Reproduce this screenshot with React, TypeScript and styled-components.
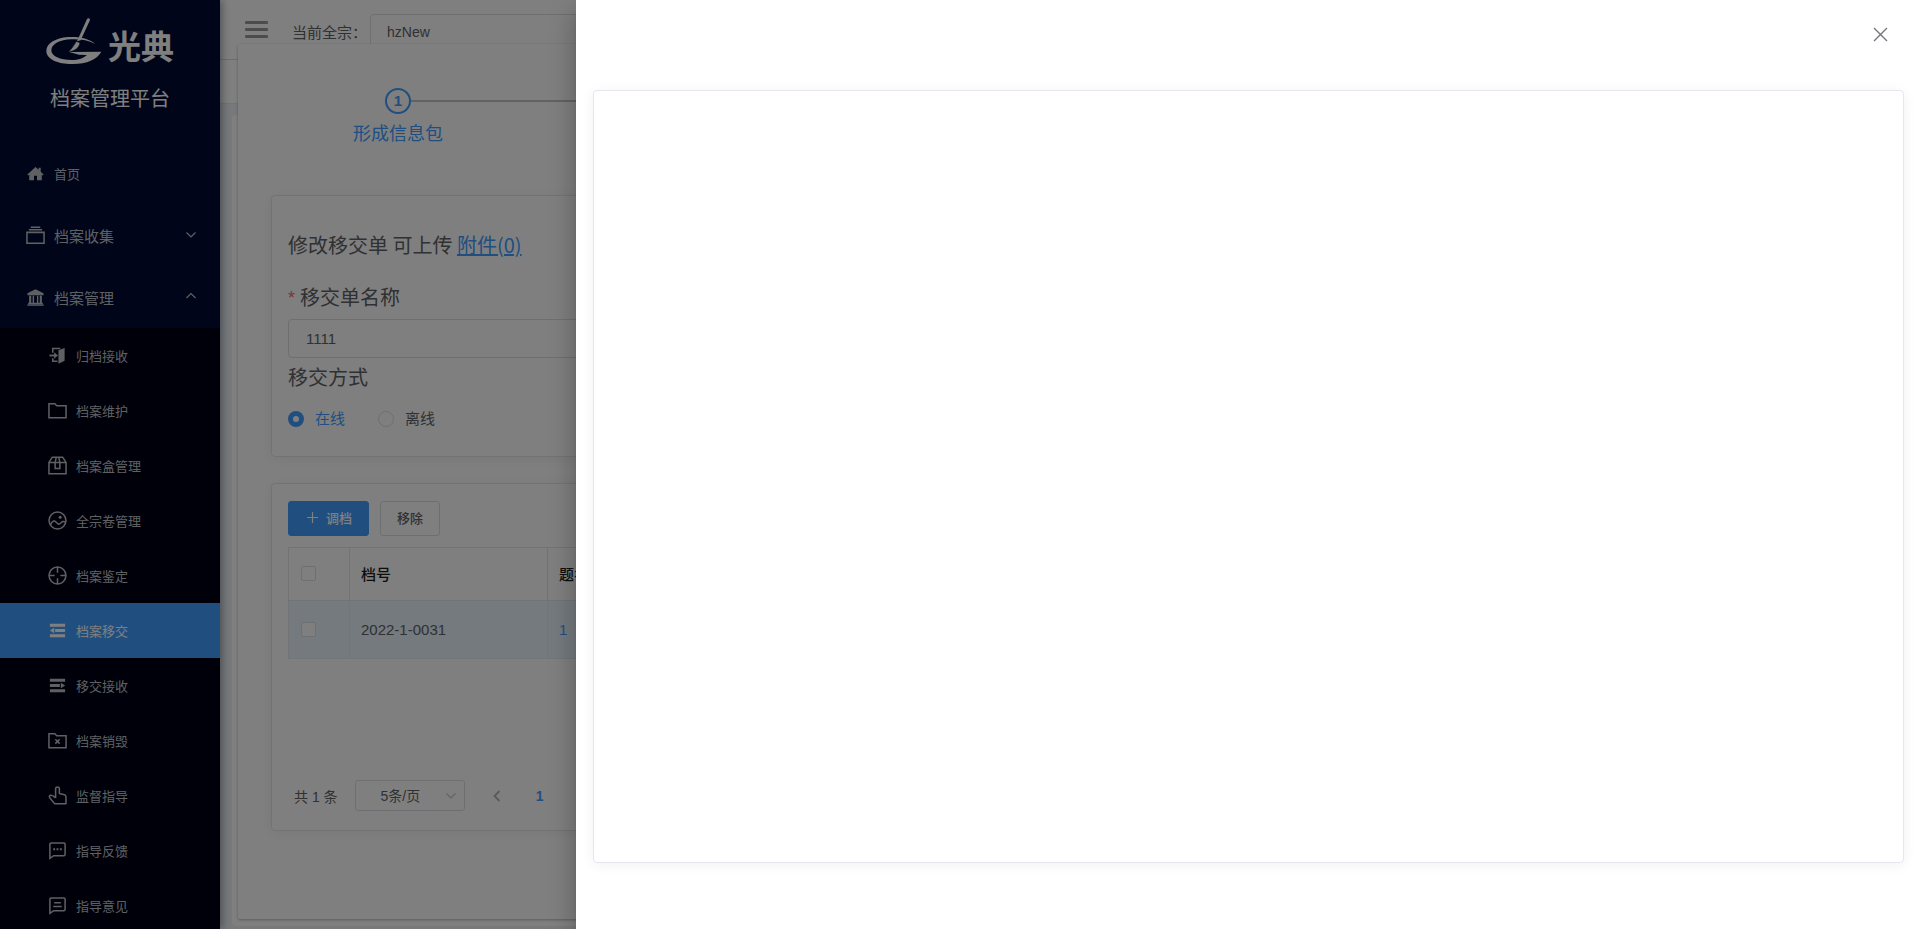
import React from 'react';
import styled, { createGlobalStyle, css } from 'styled-components';

const Global = createGlobalStyle`
  * { box-sizing: border-box; }
  html, body, #root { height: 100%; }
  body {
    margin: 0;
    overflow: hidden;
    color: #606266;
    background: #f0f2f5;
    font-family: "Liberation Sans", "Noto Sans CJK SC", sans-serif;
    font-size: 15px;
  }
  button, input, select { font-family: inherit; }
`;

const Shell = styled.div`
  position: relative;
  display: flex;
  height: 100vh;
  overflow: hidden;
`;

/* ---------- sidebar ---------- */

const Sidebar = styled.aside`
  position: relative;
  z-index: 3;
  flex: 0 0 220px;
  background: #000a32;
  color: #bfc1c5;
  box-shadow: 2px 0 8px rgba(0, 21, 41, 0.4);
  overflow: hidden;
`;

const Brand = styled.div`
  display: flex;
  flex-direction: column;
  align-items: center;
  height: 142px;
  padding-top: 14px;
  color: #fff;
`;

const LogoRow = styled.div`
  display: flex;
  align-items: center;
  gap: 6px;
  height: 54px;
`;

const LogoText = styled.span`
  padding-top: 8px;
  color: #fff;
  font: 700 33px/40px "Noto Sans CJK SC", sans-serif;
`;

const BrandTitle = styled.h1`
  margin: 16px 0 0;
  font-size: 20px;
  font-weight: 400;
  line-height: 30px;
`;

const Menu = styled.nav`
  display: flex;
  flex-direction: column;
`;

const MenuLink = styled.a<{ $small?: boolean }>`
  display: flex;
  align-items: center;
  gap: 9px;
  height: 62px;
  padding: 0 23px 0 26px;
  color: inherit;
  font-size: ${(p) => (p.$small ? 13 : 15)}px;
  text-decoration: none;
`;

const MenuLabel = styled.span`
  flex: 1;
`;

const SubMenu = styled.div`
  background: #000114;
`;

const SubLink = styled.a<{ $active?: boolean }>`
  display: flex;
  align-items: center;
  gap: 9px;
  height: 55px;
  padding-left: 48px;
  color: ${(p) => (p.$active ? '#fff' : 'inherit')};
  background: ${(p) => (p.$active ? '#409eff' : 'transparent')};
  font-size: 13px;
  text-decoration: none;
`;

/* ---------- page behind the dialog ---------- */

const Main = styled.div`
  flex: 1;
  display: flex;
  flex-direction: column;
  min-width: 0;
`;

const Header = styled.header`
  display: flex;
  align-items: center;
  flex: 0 0 60px;
  padding: 0 25px;
  background: #fff;
  border-bottom: 1px solid #d8dce5;
`;

const MenuToggle = styled.button`
  display: flex;
  margin-right: 24px;
  padding: 0;
  border: 0;
  background: none;
  color: #97999d;
`;

const FondsField = styled.div`
  display: flex;
  align-items: center;
  gap: 4px;
  padding-top: 4px;
`;

const HeaderLabel = styled.label`
  width: 74px;
  white-space: nowrap;
`;

const HeaderSelect = styled.select`
  appearance: none;
  width: 240px;
  height: 36px;
  padding: 0 16px;
  color: #606266;
  background: #fff;
  border: 1px solid #dcdfe6;
  border-radius: 4px;
  font-size: 14px;
`;

const TagsBar = styled.div`
  flex: 0 0 44px;
  background: #fff;
  border-bottom: 1px solid #e4e7ed;
`;

const PageCard = styled.div`
  flex: 1;
  margin: 11px 12px 3px;
  background: #fff;
  border-radius: 4px;
`;

/* ---------- dialog ---------- */

const Dialog = styled.section`
  position: absolute;
  z-index: 2;
  inset: 44px 6px 10px 238px;
  padding: 44px 33px 0;
  background: #fff;
  border-radius: 2px;
  box-shadow: 0 1px 3px rgba(0, 0, 0, 0.3);
`;

const Step = styled.div`
  margin-bottom: 40px;
  color: #409eff;
`;

const StepHead = styled.div`
  display: flex;
  align-items: center;
  padding-left: 114px;
`;

const StepNumber = styled.span`
  width: 26px;
  height: 26px;
  border: 2px solid #409eff;
  border-radius: 50%;
  font-size: 15px;
  font-weight: 700;
  line-height: 22px;
  text-align: center;
`;

const StepLine = styled.span`
  flex: 1;
  height: 2px;
  background: #c0c4cc;
`;

const StepTitle = styled.div`
  width: 254px;
  font-size: 18px;
  line-height: 41px;
  text-align: center;
`;

const cardStyle = css`
  background: #fff;
  border: 1px solid #e4e7ed;
  border-radius: 4px;
  box-shadow: 0 2px 14px rgba(0, 0, 0, 0.06);
`;

const FormCard = styled.form`
  ${cardStyle}
  padding: 34px 16px 27px;
  margin-bottom: 26px;
`;

const FormTitle = styled.h2`
  margin: 0 0 23px;
  font-family: "Noto Sans CJK SC", sans-serif;
  font-size: 20px;
  font-weight: 400;
  line-height: 30px;
`;

const BlueLink = styled.a`
  color: #409eff;
`;

const FieldLabel = styled.label`
  display: flex;
  align-items: center;
  margin-bottom: 6px;
  font-size: 20px;
  line-height: 30px;
`;

const Required = styled.span`
  margin-right: 5px;
  color: #f56c6c;
  font-size: 18px;
`;

const TextInput = styled.input`
  display: block;
  width: 100%;
  height: 39px;
  padding: 0 17px;
  color: #606266;
  border: 1px solid #dcdfe6;
  border-radius: 4px;
  font-size: 15px;
`;

const RadioGroup = styled.fieldset`
  margin: 5px 0 0;
  padding: 0;
  border: 0;
`;

const Legend = styled.legend`
  padding: 0;
  margin-bottom: 16px;
  font-size: 20px;
  line-height: 30px;
`;

const RadioRow = styled.div`
  display: flex;
  gap: 33px;
`;

const RadioLabel = styled.label`
  display: flex;
  align-items: center;
  gap: 11px;
  height: 20px;
  line-height: 20px;
  &:has(input:checked) { color: #409eff; }
`;

const Radio = styled.input`
  appearance: none;
  width: 16px;
  height: 16px;
  margin: 0;
  border: 1px solid #dcdfe6;
  border-radius: 50%;
  background: #fff;
  &:checked { border: 5px solid #409eff; }
`;

const ListCard = styled.div`
  ${cardStyle}
  padding: 17px 16px 19px;
`;

const Toolbar = styled.div`
  display: flex;
  gap: 11px;
  margin-bottom: 11px;
`;

const Button = styled.button<{ $primary?: boolean }>`
  display: flex;
  align-items: center;
  gap: 6px;
  height: 35px;
  padding: 0 16px 2px;
  border: 1px solid ${(p) => (p.$primary ? '#409eff' : '#dcdfe6')};
  border-radius: 3px;
  color: ${(p) => (p.$primary ? '#fff' : '#606266')};
  background: ${(p) => (p.$primary ? '#409eff' : '#fff')};
  font-size: 13px;
  font-weight: 500;
`;

const Table = styled.table`
  width: 100%;
  table-layout: fixed;
  border-collapse: separate;
  border-spacing: 0;
  border: 1px solid #e4e7ed;
  border-width: 1px 0 0 1px;
  th, td {
    padding: 0 11px;
    border: 1px solid #e4e7ed;
    border-width: 0 1px 1px 0;
    text-align: left;
  }
  th { height: 53px; padding-bottom: 2px; color: #1a1a1a; font-weight: 500; }
  td { height: 58px; background: #e9f5fd; border-color: #e2ecf3; }
`;

const Checkbox = styled.input`
  appearance: none;
  display: block;
  width: 15px;
  height: 15px;
  margin: 0 1px;
  border: 1px solid #dcdfe6;
  border-radius: 2px;
  background: #fff;
`;

const RowLink = styled.a`
  color: #409eff;
  text-decoration: none;
`;

const Pagination = styled.div`
  display: flex;
  align-items: center;
  height: 31px;
  margin-top: 121px;
  padding-left: 6px;
  font-size: 14px;
`;

const SizePicker = styled.div`
  display: grid;
  align-items: center;
  width: 110px;
  margin: 0 17px;
  color: #c0c4cc;
  > * { grid-area: 1 / 1; }
  > svg { justify-self: end; margin-right: 8px; pointer-events: none; }
`;

const SizeSelect = styled.select`
  appearance: none;
  width: 110px;
  height: 31px;
  padding: 0 25px;
  color: #606266;
  background: #fff;
  border: 1px solid #dcdfe6;
  border-radius: 3px;
  font-size: 14px;
`;

const PageButton = styled.button<{ $current?: boolean }>`
  display: flex;
  justify-content: center;
  align-items: center;
  width: 30px;
  height: 28px;
  margin-right: 13px;
  padding: 0;
  border: 0;
  background: none;
  color: ${(p) => (p.$current ? '#409eff' : '#b0b3b8')};
  font-size: 14px;
  font-weight: 700;
`;

/* ---------- drawer ---------- */

const Mask = styled.div`
  position: fixed;
  z-index: 10;
  inset: 0;
  background: rgba(0, 0, 0, 0.5);
`;

const Drawer = styled.section`
  position: fixed;
  z-index: 11;
  inset: 0 0 0 auto;
  display: flex;
  flex-direction: column;
  width: 70%;
  background: #fff;
  box-shadow: 0 8px 10px -5px rgba(0, 0, 0, 0.2),
    0 16px 24px 2px rgba(0, 0, 0, 0.14), 0 6px 30px 5px rgba(0, 0, 0, 0.12);
`;

const DrawerHeader = styled.header`
  display: flex;
  justify-content: flex-end;
  flex: 0 0 90px;
  padding: 24px 29px 0 0;
`;

const CloseButton = styled.button`
  display: flex;
  width: 21px;
  height: 21px;
  padding: 0;
  border: 0;
  background: none;
  color: #72767b;
`;

const DrawerCard = styled.div`
  ${cardStyle}
  flex: 1;
  margin: 0 16px 66px 17px;
`;

/* ---------- icons ---------- */

const Svg = ({ children, size = 19, w = 1.6 }: { children: React.ReactNode; size?: number; w?: number }) => (
  <svg width={size} height={size} viewBox="0 0 20 20" fill="none" stroke="currentColor" strokeWidth={w} aria-hidden="true">
    {children}
  </svg>
);

const HomeIcon = () => (
  <Svg><path d="M10 3.2 1.4 11l1 1 1-.8V17h5v-4.600h3.200V17h5v-5.800l1 .8 1-1-3.100-2.900V4h-2.200v2.100z" fill="currentColor" stroke="none" /></Svg>
);
const CollectIcon = () => (
  <Svg><path d="M1 6.700h18v11.500H1zM3 4h14M5 1.200h10" /></Svg>
);
const BankIcon = () => (
  <Svg><path d="M10 1.200 1.500 5.600v1.900h17V5.600zM3.300 8.200h2.200v7.300H3.300zM7 8.200h1.500v7.300H7zM11.500 8.200H13v7.300h-1.500zM14.500 8.200h2.200v7.300h-2.200zM2.300 15.500h15.400V17H2.300zM1.300 17.300h17.400v1.500H1.300z" fill="currentColor" stroke="none" /></Svg>
);
const DoorIcon = () => (
  <Svg>
    <path d="M5 7V2.700h8M5 13v3h5" />
    <path d="M11 4.600 17.500 2v13.600L11 18.600z" fill="currentColor" stroke="none" />
    <path d="M1.500 10h6" strokeWidth="2" />
    <path d="m6.500 6.500 4 3.500-4 3.500z" fill="currentColor" stroke="none" />
  </Svg>
);
const FolderIcon = () => <Svg><path d="M1 2.800h6.200l2 2.200H19v12.700H1z" /></Svg>;
const BoxIcon = () => (
  <Svg><path d="M1 6.800 4.600 1.200h10.800L19 6.800v12H1zM1 6.800h18M8.700 1.200 7.500 6.800v6.400h5V6.800l-1.200-5.600" /></Svg>
);
const PictureIcon = () => (
  <Svg><circle cx="10" cy="10" r="8.900" /><path d="M2.500 14.700c2.500-5 4.500-5.200 6.800-2.200 1.800 2.300 3 1.200 4.500-.2 1.600-1.600 3-1.600 4.700-.6" /><circle cx="12.800" cy="6.500" r="1.600" fill="currentColor" stroke="none" /></Svg>
);
const AimIcon = () => (
  <Svg><circle cx="10" cy="10" r="8.900" /><path d="M10 1v6M10 13v6M1 10h6M13 10h6" /></Svg>
);
const OutdentIcon = () => (
  <Svg><path d="M2 3h16v3H2zM7.500 8.500H18v3H7.500zM2 14h16v3H2zM2 10l4.500-3v6z" fill="currentColor" stroke="none" /></Svg>
);
const IndentIcon = () => (
  <Svg><path d="M2 3h16v3H2zM2 8.500h10.500v3H2zM2 14h16v3H2zM18 10l-4.500-3v6z" fill="currentColor" stroke="none" /></Svg>
);
const FolderXIcon = () => (
  <Svg><path d="M1 2.800h6.200l2 2.200H19v12.700H1z" /><path d="m7.700 8.700 4.600 4.600M12.300 8.700l-4.600 4.600" strokeWidth="1.700" /></Svg>
);
const PointerIcon = () => (
  <Svg><path d="M8 12.500V3a2 2 0 0 1 4 0v5l5.300 1.200q1.600.4 1.600 2V18.800H7.500Q5.500 17.500 1.600 12q-.6-1.800 1-2.300Q5 9.400 8 12.500" strokeLinejoin="round" /></Svg>
);
const ChatDotsIcon = () => (
  <Svg><path d="M2 18.300V3.500q0-1.300 1.300-1.300h13.400q1.300 0 1.300 1.300v10.700q0 1.300-1.300 1.300H6z" /><path d="M5.500 8.700h2M9 8.700h2M12.500 8.700h2" strokeWidth="2" /></Svg>
);
const ChatLinesIcon = () => (
  <Svg><path d="M2 18.300V3.500q0-1.300 1.300-1.300h13.400q1.300 0 1.300 1.300v10.700q0 1.300-1.300 1.300H6z" /><path d="M6.500 7h7M5.500 11h9" /></Svg>
);

const Chevron = ({ up }: { up?: boolean }) => (
  <svg width="12" height="12" viewBox="0 0 12 12" fill="none" stroke="currentColor" strokeWidth="1.200" aria-hidden="true">
    <path d={up ? 'M1.500 7 6 2.500 10.500 7' : 'M1.500 3.500 6 8l4.500-4.500'} />
  </svg>
);

const LogoMark = () => (
  <svg width="56" height="48" viewBox="138 48 168 144" fill="#fff" aria-hidden="true">
    <path d="M286 129C270 114 240 106 205 108 165 111 139 128 139 150c0 26 38 40 80 39 42 0 72-14 85-37l-97 1 30 8 24 1c-10 9-25 15-46 15-35 0-61-11-61-29 0-18 25-32 60-33 27-1 50 3 72 14z" />
    <path d="M261 54q3-4 8-1 2 2 0 6l-27 59-11 3z" />
    <path d="m229 121 11 4c-2 15-15 25-35 28 10-9 16-19 24-32z" stroke="#000a32" strokeWidth="2" />
  </svg>
);

const subItems: [string, React.FC][] = [
  ['归档接收', DoorIcon],
  ['档案维护', FolderIcon],
  ['档案盒管理', BoxIcon],
  ['全宗卷管理', PictureIcon],
  ['档案鉴定', AimIcon],
  ['档案移交', OutdentIcon],
  ['移交接收', IndentIcon],
  ['档案销毁', FolderXIcon],
  ['监督指导', PointerIcon],
  ['指导反馈', ChatDotsIcon],
  ['指导意见', ChatLinesIcon],
];

export default function App() {
  return (
    <>
      <Global />
      <Shell>
        <Sidebar>
          <Brand>
            <LogoRow>
              <LogoMark />
              <LogoText>光典</LogoText>
            </LogoRow>
            <BrandTitle>档案管理平台</BrandTitle>
          </Brand>
          <Menu>
            <MenuLink href="#home" $small>
              <HomeIcon />
              <MenuLabel>首页</MenuLabel>
            </MenuLink>
            <MenuLink href="#collect">
              <CollectIcon />
              <MenuLabel>档案收集</MenuLabel>
              <Chevron />
            </MenuLink>
            <MenuLink href="#manage">
              <BankIcon />
              <MenuLabel>档案管理</MenuLabel>
              <Chevron up />
            </MenuLink>
            <SubMenu>
              {subItems.map(([label, Icon]) => (
                <SubLink key={label} href={`#${label}`} $active={label === '档案移交'}>
                  <Icon />
                  {label}
                </SubLink>
              ))}
            </SubMenu>
          </Menu>
        </Sidebar>

        <Main>
          <Header>
            <MenuToggle type="button" aria-label="菜单">
              <svg width="23" height="18" viewBox="0 0 23 18" fill="currentColor" aria-hidden="true">
                <path d="M1 0h21q1 0 1 1v1q0 1-1 1H1Q0 3 0 2V1q0-1 1-1zM1 7h21q1 0 1 1v1q0 1-1 1H1q-1 0-1-1V8q0-1 1-1zM1 14h21q1 0 1 1v1q0 1-1 1H1q-1 0-1-1v-1q0-1 1-1z" />
              </svg>
            </MenuToggle>
            <FondsField>
              <HeaderLabel htmlFor="fonds">当前全宗：</HeaderLabel>
              <HeaderSelect id="fonds">
                <option>hzNew</option>
              </HeaderSelect>
            </FondsField>
          </Header>
          <TagsBar />
          <PageCard />
        </Main>

        <Dialog>
          <Step>
            <StepHead>
              <StepNumber>1</StepNumber>
              <StepLine />
            </StepHead>
            <StepTitle>形成信息包</StepTitle>
          </Step>

          <FormCard>
            <FormTitle>
              修改移交单 可上传 <BlueLink href="#files">附件(0)</BlueLink>
            </FormTitle>
            <FieldLabel htmlFor="name">
              <Required>*</Required>移交单名称
            </FieldLabel>
            <TextInput id="name" defaultValue="1111" />
            <RadioGroup>
              <Legend>移交方式</Legend>
              <RadioRow>
                <RadioLabel>
                  <Radio type="radio" name="mode" defaultChecked />在线
                </RadioLabel>
                <RadioLabel>
                  <Radio type="radio" name="mode" />离线
                </RadioLabel>
              </RadioRow>
            </RadioGroup>
          </FormCard>

          <ListCard>
            <Toolbar>
              <Button type="button" $primary>
                <svg width="15" height="15" viewBox="0 0 15 15" stroke="currentColor" strokeWidth="1.200" aria-hidden="true">
                  <path d="M7.500 2v11M2 7.500h11" />
                </svg>
                调档
              </Button>
              <Button type="button">移除</Button>
            </Toolbar>
            <Table>
              <colgroup>
                <col style={{ width: 61 }} />
                <col style={{ width: 198 }} />
                <col />
              </colgroup>
              <thead>
                <tr>
                  <th><Checkbox type="checkbox" aria-label="全选" /></th>
                  <th>档号</th>
                  <th>题名</th>
                </tr>
              </thead>
              <tbody>
                <tr>
                  <td><Checkbox type="checkbox" aria-label="2022-1-0031" /></td>
                  <td>2022-1-0031</td>
                  <td><RowLink href="#record">1</RowLink></td>
                </tr>
              </tbody>
            </Table>
            <Pagination>
              <span>共 1 条</span>
              <SizePicker>
                <SizeSelect aria-label="每页条数">
                  <option>5条/页</option>
                </SizeSelect>
                <Chevron />
              </SizePicker>
              <PageButton type="button" aria-label="上一页">
                <svg width="12" height="12" viewBox="0 0 12 12" fill="none" stroke="currentColor" strokeWidth="1.800" aria-hidden="true">
                  <path d="M8.500 1 3.500 6l5 5" />
                </svg>
              </PageButton>
              <PageButton type="button" $current>1</PageButton>
            </Pagination>
          </ListCard>
        </Dialog>
      </Shell>

      <Mask />
      <Drawer role="dialog">
        <DrawerHeader>
          <CloseButton type="button" aria-label="关闭">
            <svg width="21" height="21" viewBox="0 0 21 21" stroke="currentColor" strokeWidth="1.400" aria-hidden="true">
              <path d="m4 4 13 13M17 4 4 17" />
            </svg>
          </CloseButton>
        </DrawerHeader>
        <DrawerCard />
      </Drawer>
    </>
  );
}
